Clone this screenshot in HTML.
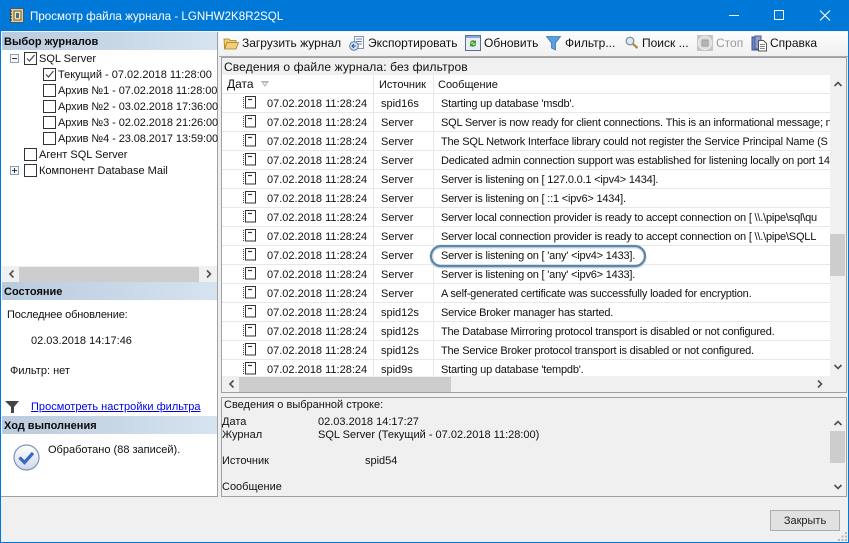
<!DOCTYPE html>
<html><head><meta charset="utf-8">
<style>
html,body{margin:0;padding:0}
body{width:849px;height:543px;overflow:hidden;background:#f0f0f0;position:relative;font:11px/14px "Liberation Sans",sans-serif;color:#111}
div,span,a,svg{position:absolute;white-space:nowrap}
.t{height:14px}
.hd{left:2px;width:215px;height:18px;background:linear-gradient(90deg,#b9cbdd,#d6e3f0);font-weight:bold;line-height:18px;color:#0a0a0a}
.hd span{top:1px}
.cb{width:11px;height:11px;border:1px solid #333;background:#fff}
.cb svg{left:0;top:0}
.r{left:222px;width:608px;height:18px;border-bottom:1px solid #e8e8e8;background:#fff}
.r span{top:3px}
.r .d{left:45px}.r .s{left:159px}.r .m{left:219px;letter-spacing:-.2px}
.r svg{left:21px;top:2px}
.tb{top:36px;font-size:12px}
</style></head><body>
<!-- window frame -->
<div style="left:0;top:0;width:849px;height:31px;background:#0078d7"></div>
<div style="left:0;top:31px;width:1px;height:512px;background:#0078d7"></div>
<div style="left:848px;top:31px;width:1px;height:512px;background:#0078d7"></div>
<div style="left:0;top:542px;width:849px;height:1px;background:#0078d7"></div>
<svg style="left:9px;top:7px" width="16" height="17" viewBox="0 0 16 17"><rect x="1.500" y="1.500" width="13" height="14" fill="#d8d0b0" stroke="#555"/><rect x="5" y="4" width="7" height="9" fill="#f4e8a0" stroke="#6a5a30"/><path d="M1 4h2M1 7h2M1 10h2M1 13h2" stroke="#222"/><rect x="7" y="6" width="3" height="5" fill="#4a6a9a"/></svg>
<div class="t" style="left:30px;top:9px;color:#fff;font-size:11.6px;line-height:15px;width:270px">Просмотр файла журнала - LGNHW2K8R2SQL</div>
<svg style="left:725px;top:5px" width="120" height="20" fill="none" stroke="#fff"><path d="M4 10.500h10"/><rect x="49.500" y="5.500" width="9" height="9"/><path d="M95 5.500l10 10M105 5.500l-10 10" stroke-width="1.100"/></svg>

<!-- left panel -->
<div style="left:1px;top:32px;width:216px;height:464px;background:#fff;border-right:1px solid #a0a0a0;border-bottom:1px solid #a0a0a0"></div>
<div class="hd" style="top:32px"><span style="left:2px">Выбор журналов</span></div>

<svg style="left:10px;top:54px" width="9" height="9"><rect x=".5" y=".5" width="8" height="8" fill="#f4f7fa" stroke="#8aa0b4"/><path d="M2 4.500h5" stroke="#333"/></svg>
<div class="cb" style="left:24px;top:52px"><svg width="11" height="11" fill="none" stroke="#444" stroke-width="1.200"><path d="M2 5.500l2.500 2.500 5-6"/></svg></div>
<div class="t" style="left:39px;top:52px">SQL Server</div>
<div class="cb" style="left:43px;top:68px"><svg width="11" height="11" fill="none" stroke="#444" stroke-width="1.200"><path d="M2 5.500l2.500 2.500 5-6"/></svg></div>
<div class="t" style="left:58px;top:68px">Текущий - 07.02.2018 11:28:00</div>
<div class="cb" style="left:43px;top:84px"></div>
<div class="t" style="left:58px;top:84px;letter-spacing:-.08px">Архив №1 - 07.02.2018 11:28:00</div>
<div class="cb" style="left:43px;top:100px"></div>
<div class="t" style="left:58px;top:100px;letter-spacing:-.08px">Архив №2 - 03.02.2018 17:36:00</div>
<div class="cb" style="left:43px;top:116px"></div>
<div class="t" style="left:58px;top:116px;letter-spacing:-.08px">Архив №3 - 02.02.2018 21:26:00</div>
<div class="cb" style="left:43px;top:132px"></div>
<div class="t" style="left:58px;top:132px;letter-spacing:-.08px">Архив №4 - 23.08.2017 13:59:00</div>
<div class="cb" style="left:24px;top:148px"></div>
<div class="t" style="left:39px;top:148px">Агент SQL Server</div>
<svg style="left:10px;top:166px" width="9" height="9"><rect x=".5" y=".5" width="8" height="8" fill="#f4f7fa" stroke="#8aa0b4"/><path d="M2 4.500h5M4.500 2v5" stroke="#333"/></svg>
<div class="cb" style="left:24px;top:164px"></div>
<div class="t" style="left:39px;top:164px">Компонент Database Mail</div>

<!-- left hscroll -->
<div style="left:2px;top:266px;width:215px;height:16px;background:#f0f0f0"></div>
<div style="left:19px;top:267px;width:180px;height:15px;background:#cdcdcd"></div>
<svg style="left:2px;top:266px" width="215" height="16" fill="none" stroke="#505050" stroke-width="1.600"><path d="M11.500 4.500l-3.500 3.500 3.500 3.500M205 4.500l3.500 3.500-3.500 3.500"/></svg>

<div class="hd" style="top:282px"><span style="left:2px">Состояние</span></div>
<div class="t" style="left:7px;top:308px;letter-spacing:-.15px">Последнее обновление:</div>
<div class="t" style="left:31px;top:334px">02.03.2018 14:17:46</div>
<div class="t" style="left:10px;top:364px">Фильтр: нет</div>
<svg style="left:5px;top:400px" width="15" height="14"><path d="M0 1h14L9 7v6H6V7z" fill="#444"/></svg>
<a href="#" style="left:31px;top:400px;color:#0000ee;text-decoration:underline;line-height:14px;letter-spacing:.03px">Просмотреть настройки фильтра</a>
<div class="hd" style="top:416px"><span style="left:2px">Ход выполнения</span></div>
<svg style="left:13px;top:444px" width="27" height="27" viewBox="0 0 27 27"><defs><linearGradient id="g" x1="0" y1="0" x2="0" y2="1"><stop offset="0" stop-color="#fff"/><stop offset="1" stop-color="#cfd9ea"/></linearGradient></defs><circle cx="13.500" cy="13.500" r="12.500" fill="url(#g)" stroke="#7f93b8" stroke-width="1.200"/><path d="M6.500 13.500l5 5 8.500-9.500" fill="none" stroke="#3a66c4" stroke-width="3.200"/></svg>
<div class="t" style="left:48px;top:443px">Обработано (88 записей).</div>

<!-- toolbar -->
<div style="left:219px;top:32px;width:629px;height:24px;background:linear-gradient(#fdfdfd,#f0f0f0);border-bottom:1px solid #a8a8a8"></div>
<svg style="left:223px;top:36px" width="16" height="14"><path d="M1 3h5l1 1.500h6v2H4L1.500 12.500zM4 6.500h11.500L13 13H1.500z" fill="#f2cf72" stroke="#a27f2e" stroke-width=".8"/></svg>
<div class="t tb" style="left:242px">Загрузить журнал</div>
<svg style="left:349px;top:35px" width="16" height="17"><rect x="5.500" y="1.500" width="9" height="12" fill="#fff" stroke="#7f93b0"/><path d="M7 4h6M7 6.500h6M7 9h6" stroke="#6080b0"/><circle cx="5" cy="11" r="4.300" fill="#d8e4f4" stroke="#5a7fb4"/><path d="M7 11H3.500M5 9l-2 2 2 2" fill="none" stroke="#2a5aa4" stroke-width="1.100"/></svg>
<div class="t tb" style="left:368px">Экспортировать</div>
<svg style="left:465px;top:35px" width="16" height="16"><rect x=".5" y=".5" width="15" height="15" fill="#e9eef5" stroke="#5a6f96"/><rect x="1" y="1" width="14" height="2" fill="#8aa8dc"/><path d="M5 8a3 3 0 0 1 5-2l1-1v3.500H7.500l1-1a2 2 0 0 0-3 1zM11 9a3 3 0 0 1-5 2l-1 1V8.500h3.500l-1 1a2 2 0 0 0 3-1z" fill="#3f9a2c"/></svg>
<div class="t tb" style="left:484px">Обновить</div>
<svg style="left:546px;top:36px" width="16" height="15"><path d="M.5 .5h14L9.500 7v7l-4-2V7z" fill="#5aa0dc" stroke="#3a78b8" stroke-width=".8"/></svg>
<div class="t tb" style="left:565px">Фильтр...</div>
<svg style="left:625px;top:36px" width="14" height="14"><circle cx="5" cy="5" r="3.800" fill="#dce8f4" stroke="#7a8a9a" stroke-width="1.200"/><path d="M8 8l4.500 4" stroke="#b08a40" stroke-width="2.200"/></svg>
<div class="t tb" style="left:642px">Поиск ...</div>
<svg style="left:697px;top:35px" width="16" height="16"><rect width="16" height="16" fill="#c6c6c6"/><circle cx="8" cy="8" r="6.500" fill="#dadada" stroke="#f0f0f0"/><rect x="5" y="5" width="6" height="6" fill="#b4b4b4" stroke="#a0a0a0"/></svg>
<div class="t tb" style="left:716px;color:#9a9a9a">Стоп</div>
<svg style="left:751px;top:35px" width="17" height="17"><rect x="1" y="2" width="7" height="13" fill="#6f86c0" stroke="#3f528c"/><rect x="4" y="1" width="6" height="13" fill="#8ea0d0" stroke="#4a5c94"/><path d="M7.500 5.500h5l3 3v7.500h-8z" fill="#fff" stroke="#555"/><path d="M9 9.500h5M9 11.500h5M9 13.500h5" stroke="#888"/></svg>
<div class="t tb" style="left:770px">Справка</div>

<!-- grid panel -->
<div style="left:221px;top:57px;width:624px;height:334px;border:1px solid #a0a0a0;background:#f0f0f0"></div>
<div class="t" style="left:224px;top:60px;font-size:12px;letter-spacing:.13px">Сведения о файле журнала: без фильтров</div>
<div style="left:222px;top:75px;width:608px;height:18px;background:#fff;border-bottom:1px solid #e8e8e8"></div>
<div class="t" style="left:227px;top:77px;font-size:12px">Дата</div>
<svg style="left:261px;top:81px" width="8" height="7"><path d="M0 0h8L4 6z" fill="#b0b0b0"/><path d="M2 1.500h4L4 4.500z" fill="#e8e8e8"/></svg>
<div class="t" style="left:379px;top:78px">Источник</div>
<div class="t" style="left:438px;top:78px">Сообщение</div>

<div class="r" style="top:94px"><svg width="13" height="13" fill="none"><rect x="2.500" y=".5" width="10" height="11.500" fill="#fff" stroke="#333"/><path d="M.5 1v11" stroke="#444" stroke-dasharray="1 1"/><path d="M5 3.500h4" stroke="#333" stroke-width="1.200"/></svg><span class="d">07.02.2018 11:28:24</span><span class="s">spid16s</span><span class="m">Starting up database 'msdb'.</span></div>
<div class="r" style="top:113px"><svg width="13" height="13" fill="none"><rect x="2.500" y=".5" width="10" height="11.500" fill="#fff" stroke="#333"/><path d="M.5 1v11" stroke="#444" stroke-dasharray="1 1"/><path d="M5 3.500h4" stroke="#333" stroke-width="1.200"/></svg><span class="d">07.02.2018 11:28:24</span><span class="s">Server</span><span class="m">SQL Server is now ready for client connections. This is an informational message; n</span></div>
<div class="r" style="top:132px"><svg width="13" height="13" fill="none"><rect x="2.500" y=".5" width="10" height="11.500" fill="#fff" stroke="#333"/><path d="M.5 1v11" stroke="#444" stroke-dasharray="1 1"/><path d="M5 3.500h4" stroke="#333" stroke-width="1.200"/></svg><span class="d">07.02.2018 11:28:24</span><span class="s">Server</span><span class="m">The SQL Network Interface library could not register the Service Principal Name (S</span></div>
<div class="r" style="top:151px"><svg width="13" height="13" fill="none"><rect x="2.500" y=".5" width="10" height="11.500" fill="#fff" stroke="#333"/><path d="M.5 1v11" stroke="#444" stroke-dasharray="1 1"/><path d="M5 3.500h4" stroke="#333" stroke-width="1.200"/></svg><span class="d">07.02.2018 11:28:24</span><span class="s">Server</span><span class="m">Dedicated admin connection support was established for listening locally on port 14</span></div>
<div class="r" style="top:170px"><svg width="13" height="13" fill="none"><rect x="2.500" y=".5" width="10" height="11.500" fill="#fff" stroke="#333"/><path d="M.5 1v11" stroke="#444" stroke-dasharray="1 1"/><path d="M5 3.500h4" stroke="#333" stroke-width="1.200"/></svg><span class="d">07.02.2018 11:28:24</span><span class="s">Server</span><span class="m">Server is listening on [ 127.0.0.1 &lt;ipv4&gt; 1434].</span></div>
<div class="r" style="top:189px"><svg width="13" height="13" fill="none"><rect x="2.500" y=".5" width="10" height="11.500" fill="#fff" stroke="#333"/><path d="M.5 1v11" stroke="#444" stroke-dasharray="1 1"/><path d="M5 3.500h4" stroke="#333" stroke-width="1.200"/></svg><span class="d">07.02.2018 11:28:24</span><span class="s">Server</span><span class="m">Server is listening on [ ::1 &lt;ipv6&gt; 1434].</span></div>
<div class="r" style="top:208px"><svg width="13" height="13" fill="none"><rect x="2.500" y=".5" width="10" height="11.500" fill="#fff" stroke="#333"/><path d="M.5 1v11" stroke="#444" stroke-dasharray="1 1"/><path d="M5 3.500h4" stroke="#333" stroke-width="1.200"/></svg><span class="d">07.02.2018 11:28:24</span><span class="s">Server</span><span class="m">Server local connection provider is ready to accept connection on [ \\.\pipe\sql\qu</span></div>
<div class="r" style="top:227px"><svg width="13" height="13" fill="none"><rect x="2.500" y=".5" width="10" height="11.500" fill="#fff" stroke="#333"/><path d="M.5 1v11" stroke="#444" stroke-dasharray="1 1"/><path d="M5 3.500h4" stroke="#333" stroke-width="1.200"/></svg><span class="d">07.02.2018 11:28:24</span><span class="s">Server</span><span class="m">Server local connection provider is ready to accept connection on [ \\.\pipe\SQLL</span></div>
<div class="r" style="top:246px"><svg width="13" height="13" fill="none"><rect x="2.500" y=".5" width="10" height="11.500" fill="#fff" stroke="#333"/><path d="M.5 1v11" stroke="#444" stroke-dasharray="1 1"/><path d="M5 3.500h4" stroke="#333" stroke-width="1.200"/></svg><span class="d">07.02.2018 11:28:24</span><span class="s">Server</span><span class="m">Server is listening on [ 'any' &lt;ipv4&gt; 1433].</span></div>
<div class="r" style="top:265px"><svg width="13" height="13" fill="none"><rect x="2.500" y=".5" width="10" height="11.500" fill="#fff" stroke="#333"/><path d="M.5 1v11" stroke="#444" stroke-dasharray="1 1"/><path d="M5 3.500h4" stroke="#333" stroke-width="1.200"/></svg><span class="d">07.02.2018 11:28:24</span><span class="s">Server</span><span class="m">Server is listening on [ 'any' &lt;ipv6&gt; 1433].</span></div>
<div class="r" style="top:284px"><svg width="13" height="13" fill="none"><rect x="2.500" y=".5" width="10" height="11.500" fill="#fff" stroke="#333"/><path d="M.5 1v11" stroke="#444" stroke-dasharray="1 1"/><path d="M5 3.500h4" stroke="#333" stroke-width="1.200"/></svg><span class="d">07.02.2018 11:28:24</span><span class="s">Server</span><span class="m">A self-generated certificate was successfully loaded for encryption.</span></div>
<div class="r" style="top:303px"><svg width="13" height="13" fill="none"><rect x="2.500" y=".5" width="10" height="11.500" fill="#fff" stroke="#333"/><path d="M.5 1v11" stroke="#444" stroke-dasharray="1 1"/><path d="M5 3.500h4" stroke="#333" stroke-width="1.200"/></svg><span class="d">07.02.2018 11:28:24</span><span class="s">spid12s</span><span class="m">Service Broker manager has started.</span></div>
<div class="r" style="top:322px"><svg width="13" height="13" fill="none"><rect x="2.500" y=".5" width="10" height="11.500" fill="#fff" stroke="#333"/><path d="M.5 1v11" stroke="#444" stroke-dasharray="1 1"/><path d="M5 3.500h4" stroke="#333" stroke-width="1.200"/></svg><span class="d">07.02.2018 11:28:24</span><span class="s">spid12s</span><span class="m">The Database Mirroring protocol transport is disabled or not configured.</span></div>
<div class="r" style="top:341px"><svg width="13" height="13" fill="none"><rect x="2.500" y=".5" width="10" height="11.500" fill="#fff" stroke="#333"/><path d="M.5 1v11" stroke="#444" stroke-dasharray="1 1"/><path d="M5 3.500h4" stroke="#333" stroke-width="1.200"/></svg><span class="d">07.02.2018 11:28:24</span><span class="s">spid12s</span><span class="m">The Service Broker protocol transport is disabled or not configured.</span></div>
<div class="r" style="top:360px;height:16px;border:0;overflow:hidden"><svg width="13" height="13" fill="none"><rect x="2.500" y=".5" width="10" height="11.500" fill="#fff" stroke="#333"/><path d="M.5 1v11" stroke="#444" stroke-dasharray="1 1"/><path d="M5 3.500h4" stroke="#333" stroke-width="1.200"/></svg><span class="d">07.02.2018 11:28:24</span><span class="s">spid9s</span><span class="m">Starting up database 'tempdb'.</span></div>
<!-- column separators -->
<div style="left:373px;top:75px;width:1px;height:301px;background:#e8e8e8"></div>
<div style="left:433px;top:75px;width:1px;height:301px;background:#e8e8e8"></div>

<!-- grid scrollbars -->
<div style="left:830px;top:75px;width:15px;height:301px;background:#f0f0f0"></div>
<div style="left:830px;top:234px;width:15px;height:42px;background:#cdcdcd"></div>
<svg style="left:830px;top:75px" width="16" height="301" fill="none" stroke="#505050" stroke-width="1.600"><path d="M4.500 11l3.500-3.500 3.500 3.500M4.500 290l3.500 3.500 3.500-3.500"/></svg>
<div style="left:222px;top:376px;width:623px;height:16px;background:#f0f0f0"></div>
<div style="left:239px;top:377px;width:212px;height:15px;background:#cdcdcd"></div>
<svg style="left:222px;top:376px" width="624" height="16" fill="none" stroke="#505050" stroke-width="1.600"><path d="M11.500 4.500l-3.500 3.500 3.500 3.500M596 4.500l3.500 3.500-3.500 3.500"/></svg>

<!-- highlight oval -->
<svg style="left:428px;top:243px" width="222" height="28"><rect x="3" y="3" width="214" height="20" rx="10" ry="10" fill="none" stroke="#a9bccc" stroke-width="3" transform="translate(0,1)" opacity=".6"/><rect x="3" y="3" width="214" height="20" rx="10" ry="10" fill="none" stroke="#5a87ab" stroke-width="2.200"/></svg>

<!-- details panel -->
<div style="left:221px;top:397px;width:624px;height:98px;border:1px solid #a0a0a0;background:#f0f0f0"></div>
<div class="t" style="left:224px;top:398px">Сведения о выбранной строке:</div>
<div class="t" style="left:222px;top:415px">Дата</div>
<div class="t" style="left:318px;top:415px">02.03.2018 14:17:27</div>
<div class="t" style="left:222px;top:428px">Журнал</div>
<div class="t" style="left:318px;top:428px">SQL Server (Текущий - 07.02.2018 11:28:00)</div>
<div class="t" style="left:222px;top:454px">Источник</div>
<div class="t" style="left:365px;top:454px">spid54</div>
<div class="t" style="left:222px;top:480px">Сообщение</div>
<div style="left:830px;top:414px;width:15px;height:81px;background:#f0f0f0"></div>
<div style="left:830px;top:431px;width:15px;height:32px;background:#cdcdcd"></div>
<svg style="left:830px;top:414px" width="16" height="82" fill="none" stroke="#505050" stroke-width="1.600"><path d="M4.500 11l3.500-3.500 3.500 3.500M4.500 71l3.500 3.500 3.500-3.500"/></svg>

<!-- close button -->
<div style="left:770px;top:510px;width:68px;height:19px;background:#e1e1e1;border:1px solid #adadad;text-align:center;line-height:19px"><span style="left:0;width:68px;top:1px;color:#222">Закрыть</span></div>
<svg style="left:838px;top:532px" width="10" height="10" fill="#b8b8b8"><rect x="7" y="0" width="2" height="2"/><rect x="3.500" y="3.500" width="2" height="2"/><rect x="7" y="3.500" width="2" height="2"/><rect x="0" y="7" width="2" height="2"/><rect x="3.500" y="7" width="2" height="2"/><rect x="7" y="7" width="2" height="2"/></svg>
</body></html>
